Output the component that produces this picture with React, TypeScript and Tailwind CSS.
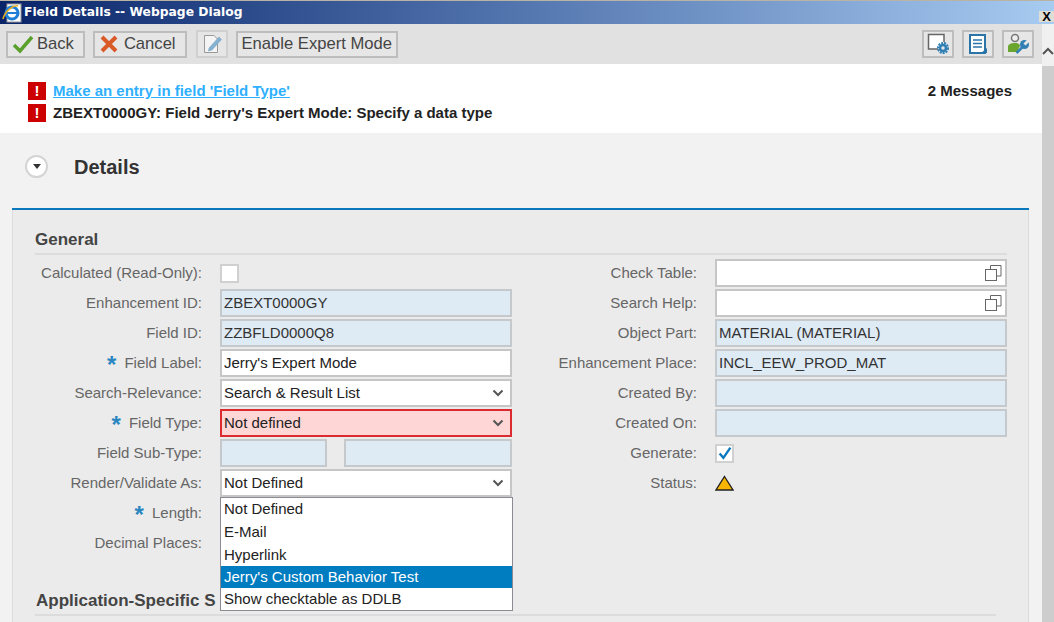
import React from 'react';

const FONT = "font-['Liberation_Sans',Arial,sans-serif]";

function Chevron() {
  return (
    <svg width="12" height="8" viewBox="0 0 12 8" className="shrink-0">
      <path d="M1.5 1.5 L6 6 L10.5 1.5" fill="none" stroke="#555" strokeWidth="2" />
    </svg>
  );
}

function ValueHelp() {
  return (
    <svg width="18" height="18" viewBox="0 0 18 18" className="shrink-0 -mr-[3px]">
      <path d="M6.5 5.5 V1.5 H17 V12 H12.5" fill="none" stroke="#666" strokeWidth="1" />
      <rect x="1.5" y="5.5" width="11" height="11" fill="#fff" stroke="#666" strokeWidth="1" />
    </svg>
  );
}

function Label({ text, required }: { text: string; required?: boolean }) {
  return (
    <div className="w-[202px] shrink-0 flex justify-end items-center text-[15px] text-[#666]">
      {required && <span className="text-[#2a86c0] font-bold text-[24px] leading-none mr-[8px] h-[20px]">*</span>}
      <span>{text}</span>
    </div>
  );
}

function Field({ value, kind = 'white', icon }: { value?: string; kind?: 'white' | 'ro' | 'error'; icon?: React.ReactNode }) {
  const tone =
    kind === 'ro'
      ? 'bg-[#deeaf4] border-[#c6c9cb] text-[#333]'
      : kind === 'error'
        ? 'bg-[#ffd6d6] border-[#dc2b2f] text-[#222]'
        : 'bg-white border-[#c6c6c6] text-[#222]';
  return (
    <div className={`h-[28px] w-[292px] border-2 ${tone} flex items-center justify-between pl-[2px] pr-[6px] text-[15px]`}>
      <span>{value}</span>
      {icon}
    </div>
  );
}

function Row({ children }: { children: React.ReactNode }) {
  return <div className="h-[30px] flex items-center">{children}</div>;
}

function RightLabel({ text }: { text: string }) {
  return <div className="w-[172px] shrink-0 text-right text-[15px] text-[#666] mr-[18px]">{text}</div>;
}

function ErrorIcon() {
  return (
    <div className="w-[18px] h-[18px] bg-[#cc0000] text-white font-bold text-[15px] leading-[18px] text-center shrink-0">!</div>
  );
}

function ToolButton({ children }: { children: React.ReactNode }) {
  return (
    <div className="h-[27px] border-2 border-[#bdbdbd] bg-[#e6e6e6] flex items-center text-[16.6px] text-[#444] px-1">{children}</div>
  );
}

function IconButton({ children }: { children: React.ReactNode }) {
  return (
    <div className="w-[32px] h-[28px] border-2 border-[#bdbdbd] bg-[#e6e6e6] flex items-center justify-center">{children}</div>
  );
}

export default function App() {
  return (
    <div className={`w-[1054px] h-[622px] overflow-hidden flex flex-col bg-[#f2f2f2] ${FONT}`}>
      {/* title bar */}
      <div className="h-[24px] shrink-0 border-t border-[#b9b3a6] bg-gradient-to-r from-[#0a246a] via-[#5577b0] to-[#a8cbf1] flex items-center">
        <svg width="22" height="22" viewBox="0 0 22 22" className="ml-[1px] shrink-0">
          <rect x="6" y="2" width="14" height="18" fill="#fff" stroke="#999" />
          <circle cx="11" cy="11" r="6" fill="none" stroke="#1f7fd6" strokeWidth="3" />
          <path d="M5 11 H17" stroke="#1f7fd6" strokeWidth="2" />
          <path d="M2 17 C4 9 12 3 17 4" fill="none" stroke="#e8b020" strokeWidth="1.5" />
        </svg>
        <span className="ml-[1px] text-white font-bold text-[12.3px] font-['DejaVu_Sans',sans-serif]">Field Details -- Webpage Dialog</span>
        <div className="ml-auto w-[15px] h-[11px] bg-[#e0ddd5] text-black text-[13px] leading-[11px] font-bold text-center self-end mb-[2px]">X</div>
      </div>

      <div className="flex-1 flex min-h-0">
        <div className="w-[1042px] flex flex-col min-h-0">
          {/* toolbar */}
          <div className="h-[40px] shrink-0 bg-[#e1e1e1] flex items-center pl-[6px] pr-[8px]">
            <ToolButton>
              <svg width="22" height="20" viewBox="0 0 22 20" className="mr-[3px]">
                <path d="M2 11 L8 17 L20 3" fill="none" stroke="#5aa02c" strokeWidth="3.5" />
              </svg>
              <span className="pr-[5px]">Back</span>
            </ToolButton>
            <div className="w-[8px]" />
            <ToolButton>
              <svg width="20" height="18" viewBox="0 0 20 18" className="mr-[5px]">
                <path d="M3 2 L17 16 M17 2 L3 16" fill="none" stroke="#d95a26" strokeWidth="4" />
              </svg>
              <span className="pr-[5px]">Cancel</span>
            </ToolButton>
            <div className="w-[9px]" />
            <div className="w-[32px] h-[28px] border-2 border-[#d0d0d0] bg-[#e6e6e6] flex items-center justify-center">
              <svg width="22" height="22" viewBox="0 0 22 22">
                <path d="M3.5 2.5 H13 L16.5 6 V19.5 H3.5 Z" fill="#f4f4f4" stroke="#999" />
                <path d="M8 15 L18 4 L20.5 6.5 L11 17 L7.5 18 Z" fill="#86b2d2" stroke="#6f9dbf" strokeWidth="0.5" />
              </svg>
            </div>
            <div className="w-[8px]" />
            <ToolButton>
              <span>Enable Expert Mode</span>
            </ToolButton>
            <div className="ml-auto flex gap-[8px]">
              <IconButton>
                <svg width="24" height="22" viewBox="0 0 24 22">
                  <path d="M12 16 H2.5 V1.5 H18 V9" fill="#fff" stroke="#666" strokeWidth="1.5" />
                  <circle cx="17" cy="15" r="5" fill="none" stroke="#2f7fb5" strokeWidth="2" strokeDasharray="2 1" />
                  <circle cx="17" cy="15" r="3" fill="none" stroke="#2f7fb5" strokeWidth="2.5" />
                </svg>
              </IconButton>
              <IconButton>
                <svg width="22" height="22" viewBox="0 0 22 22">
                  <rect x="3" y="2" width="15" height="18" fill="#fff" stroke="#2a74a8" strokeWidth="2" />
                  <path d="M6 7 H15 M6 10.5 H15 M6 14 H15" stroke="#2a74a8" strokeWidth="1.5" />
                  <path d="M14 20 L20 20 L20 15 Z" fill="#2a74a8" />
                </svg>
              </IconButton>
              <IconButton>
                <svg width="24" height="24" viewBox="0 0 24 24">
                  <circle cx="9" cy="6" r="3.5" fill="#eee" stroke="#777" strokeWidth="1.5" />
                  <path d="M2 20 V15 C2 12 5 11 9 11 C12 11 14 12 14 14 L11 20 Z" fill="#6aa52e" />
                  <path d="M10.5 21 L17 14.5" fill="none" stroke="#2f7fb5" strokeWidth="2.5" />
                  <circle cx="18.5" cy="12.5" r="4.5" fill="#2f7fb5" />
                  <path d="M18.5 12.5 L23 8" fill="none" stroke="#e6e6e6" strokeWidth="3" />
                </svg>
              </IconButton>
            </div>
          </div>

          {/* messages */}
          <div className="h-[69px] shrink-0 bg-white pl-[28px] pr-[30px] pt-[18px] flex justify-between">
            <div className="flex flex-col gap-[4px]">
              <div className="flex items-center gap-[7px] h-[18px]">
                <ErrorIcon />
                <a className="text-[#2fb0ff] underline font-bold text-[15px]">Make an entry in field 'Field Type'</a>
              </div>
              <div className="flex items-center gap-[7px] h-[18px]">
                <ErrorIcon />
                <span className="text-[#222] font-bold text-[15px]">ZBEXT0000GY: Field Jerry's Expert Mode: Specify a data type</span>
              </div>
            </div>
            <div className="text-[15px] font-bold text-[#222] -mt-[2px]">2 Messages</div>
          </div>

          {/* details header */}
          <div className="h-[75px] shrink-0 pl-[25px] flex items-start pt-[22px]">
            <div className="w-[23px] h-[23px] rounded-full bg-white border-2 border-[#d4d4d4] flex items-center justify-center">
              <div className="w-0 h-0 border-l-[4px] border-r-[4px] border-t-[5px] border-l-transparent border-r-transparent border-t-[#333]" />
            </div>
            <div className="ml-[26px] text-[20px] font-bold text-[#333] leading-[24px]">Details</div>
          </div>

          {/* panel */}
          <div className="ml-[12px] mr-[13px] flex-1 min-h-0 border-t-2 border-[#0a78bd]">
            <div className="h-full bg-[#ebebeb] border-l border-r border-[#dcdcdc] pl-[22px] pr-[21px] pt-[19px] relative">
              <div className="h-[26px] border-b-2 border-[#dcdcdc] text-[17px] font-bold text-[#444] leading-[22px]">General</div>
              <div className="flex -ml-[35px] pt-[3px]">
                <div className="w-[512px] shrink-0">
                  <Row>
                    <Label text="Calculated (Read-Only):" />
                    <div className="ml-[18px] w-[19px] h-[19px] bg-white border-2 border-[#d0d0d0]" />
                  </Row>
                  <Row><Label text="Enhancement ID:" /><div className="ml-[18px]"><Field kind="ro" value="ZBEXT0000GY" /></div></Row>
                  <Row><Label text="Field ID:" /><div className="ml-[18px]"><Field kind="ro" value="ZZBFLD0000Q8" /></div></Row>
                  <Row><Label text="Field Label:" required /><div className="ml-[18px]"><Field value="Jerry's Expert Mode" /></div></Row>
                  <Row><Label text="Search-Relevance:" /><div className="ml-[18px]"><Field value="Search & Result List" icon={<Chevron />} /></div></Row>
                  <Row><Label text="Field Type:" required /><div className="ml-[18px]"><Field kind="error" value="Not defined" icon={<Chevron />} /></div></Row>
                  <Row>
                    <Label text="Field Sub-Type:" />
                    <div className="ml-[18px] flex gap-[17px]">
                      <div className="w-[107px] h-[28px] bg-[#deeaf4] border-2 border-[#c6c9cb]" />
                      <div className="w-[168px] h-[28px] bg-[#deeaf4] border-2 border-[#c6c9cb]" />
                    </div>
                  </Row>
                  <Row><Label text="Render/Validate As:" /><div className="ml-[18px]"><Field value="Not Defined" icon={<Chevron />} /></div></Row>
                  <Row><Label text="Length:" required /></Row>
                  <Row><Label text="Decimal Places:" /></Row>
                </div>
                <div className="w-[13px] shrink-0" />
                <div>
                  <Row><RightLabel text="Check Table:" /><Field icon={<ValueHelp />} /></Row>
                  <Row><RightLabel text="Search Help:" /><Field icon={<ValueHelp />} /></Row>
                  <Row><RightLabel text="Object Part:" /><Field kind="ro" value="MATERIAL (MATERIAL)" /></Row>
                  <Row><RightLabel text="Enhancement Place:" /><Field kind="ro" value="INCL_EEW_PROD_MAT" /></Row>
                  <Row><RightLabel text="Created By:" /><Field kind="ro" /></Row>
                  <Row><RightLabel text="Created On:" /><Field kind="ro" /></Row>
                  <Row>
                    <RightLabel text="Generate:" />
                    <div className="w-[19px] h-[19px] bg-white border-2 border-[#d0d0d0] flex items-center justify-center">
                      <svg width="14" height="14" viewBox="0 0 13 13">
                        <path d="M1.5 7 L5 11 L11.5 1.5" fill="none" stroke="#0a78bd" strokeWidth="2.2" />
                      </svg>
                    </div>
                  </Row>
                  <Row>
                    <RightLabel text="Status:" />
                    <svg width="19" height="16" viewBox="0 0 19 16">
                      <path d="M9.5 1.5 L18 15 H1 Z" fill="#f7b500" stroke="#222" strokeWidth="1.3" />
                    </svg>
                  </Row>
                </div>
              </div>
              <div className="mt-[32px] h-[26px] mr-[11px] border-b-2 border-[#dcdcdc] text-[17px] font-bold text-[#444] leading-[22px] pl-[1px]">Application-Specific S</div>

              {/* open dropdown */}
              <div className="absolute left-[207px] top-[287px] w-[293px] bg-white border border-[#8b8b92] text-[15px] text-[#222]">
                <div className="h-[22px] px-[3px] leading-[22px]">Not Defined</div>
                <div className="h-[23px] px-[3px] leading-[23px]">E-Mail</div>
                <div className="h-[23px] px-[3px] leading-[23px]">Hyperlink</div>
                <div className="h-[22px] px-[3px] leading-[22px] bg-[#007cc0] text-white">Jerry's Custom Behavior Test</div>
                <div className="h-[22px] px-[3px] leading-[22px]">Show checktable as DDLB</div>
              </div>
            </div>
          </div>
        </div>

        {/* scrollbar */}
        <div className="w-[12px] flex flex-col">
          <div className="h-[42px] bg-[#f0f0f0] flex items-end justify-center pb-[11px]">
            <svg width="12" height="8" viewBox="0 0 12 8">
              <path d="M1 7 L6 2 L11 7" fill="none" stroke="#555" strokeWidth="2" />
            </svg>
          </div>
          <div className="flex-1 bg-[#cdcdcd]" />
        </div>
      </div>
    </div>
  );
}
